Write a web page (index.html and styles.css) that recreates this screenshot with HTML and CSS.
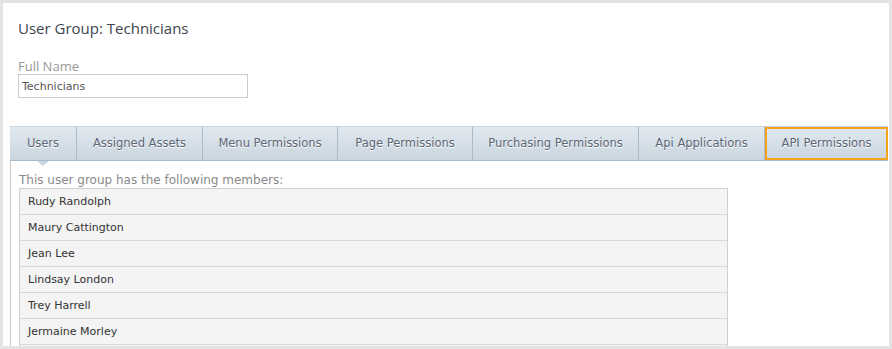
FILE: index.html
```html
<!DOCTYPE html>
<html lang="en">
<head>
    <meta charset="UTF-8">
    <title>User Group: Technicians</title>
    <link rel="stylesheet" href="styles.css">
</head>
<body>
    <div class="panel">
        <h1 class="page-title">User Group: Technicians</h1>

        <div class="field">
            <label class="field-label" for="full-name">Full Name</label>
            <input type="text" id="full-name" class="field-input" value="Technicians">
        </div>

        <div class="tabs">
            <ul class="tab-list">
                <li class="tab active">Users</li>
                <li class="tab">Assigned Assets</li>
                <li class="tab">Menu Permissions</li>
                <li class="tab">Page Permissions</li>
                <li class="tab">Purchasing Permissions</li>
                <li class="tab">Api Applications</li>
                <li class="tab highlighted">API Permissions</li>
            </ul>
            <div class="tab-body">
                <p class="members-note">This user group has the following members:</p>
                <ul class="member-list">
                    <li>Rudy Randolph</li>
                    <li>Maury Cattington</li>
                    <li>Jean Lee</li>
                    <li>Lindsay London</li>
                    <li>Trey Harrell</li>
                    <li>Jermaine Morley</li>
                    <li></li>
                </ul>
            </div>
        </div>
    </div>
</body>
</html>
```

FILE: styles.css
```css
* {
    margin: 0;
    padding: 0;
    box-sizing: border-box;
}

html, body {
    height: 100%;
    overflow: hidden;
}

body {
    font-family: "DejaVu Sans", Verdana, sans-serif;
    background: #e4e4e4;
    padding: 3px;
    color: #333;
}

.panel {
    background: #fff;
    height: 100%;
    padding-top: 15px;
    overflow: hidden;
}

.page-title {
    font-family: "Open Sans", sans-serif;
    font-weight: normal;
    font-size: 15px;
    color: #3d4450;
    margin-left: 15px;
    line-height: 20px;
}

.field {
    margin: 20px 0 0 15px;
    display: flex;
    flex-direction: column;
    width: 230px;
}

.field-label {
    font-family: "Open Sans", sans-serif;
    font-size: 13px;
    color: #999;
    line-height: 16px;
}

.field-input {
    height: 24px;
    border: 1px solid #ccc;
    padding: 0 3px;
    font-family: "DejaVu Sans", sans-serif;
    font-size: 11px;
    color: #555;
    outline: none;
}

.tabs {
    margin: 28px 1px 0 7px;
}

.tab-list {
    list-style: none;
    display: flex;
    height: 35px;
    background: linear-gradient(#e2e9ef, #c9d5df);
    border-top: 1px solid #c7d3dd;
    border-bottom: 1px solid #a9bccb;
}

.tab {
    position: relative;
    font-size: 11.5px;
    color: #5a6575;
    text-shadow: 0 1px 0 #fff;
    line-height: 33px;
    text-align: center;
    border-right: 1px solid #a9bccb;
}

.tab:nth-child(1) { width: 67px; }
.tab:nth-child(2) { width: 126px; }
.tab:nth-child(3) { width: 135px; }
.tab:nth-child(4) { width: 135px; }
.tab:nth-child(5) { width: 166px; }
.tab:nth-child(6) { width: 126px; }
.tab:nth-child(7) { flex: 1; border-right: none; }

.tab.active::after {
    content: "";
    position: absolute;
    left: 27px;
    bottom: -6px;
    border-left: 6px solid transparent;
    border-right: 6px solid transparent;
    border-top: 5px solid #c9d5df;
}

.tab.highlighted {
    box-shadow: inset 0 0 0 2px #f7a21b;
}

.tab-body {
    border-left: 1px solid #c8c8c8;
    padding: 12px 0 0 8px;
    height: 200px;
}

.members-note {
    font-family: "DejaVu Sans", sans-serif;
    font-size: 12px;
    color: #8a8a8a;
    line-height: 14px;
}

.member-list {
    list-style: none;
    width: 709px;
    margin-top: 1px;
    border: 1px solid #cfcfcf;
    background: #f4f4f4;
}

.member-list li {
    height: 26px;
    line-height: 25px;
    padding-left: 8px;
    font-size: 11px;
    color: #333;
    border-bottom: 1px solid #d9d9d9;
}
```
